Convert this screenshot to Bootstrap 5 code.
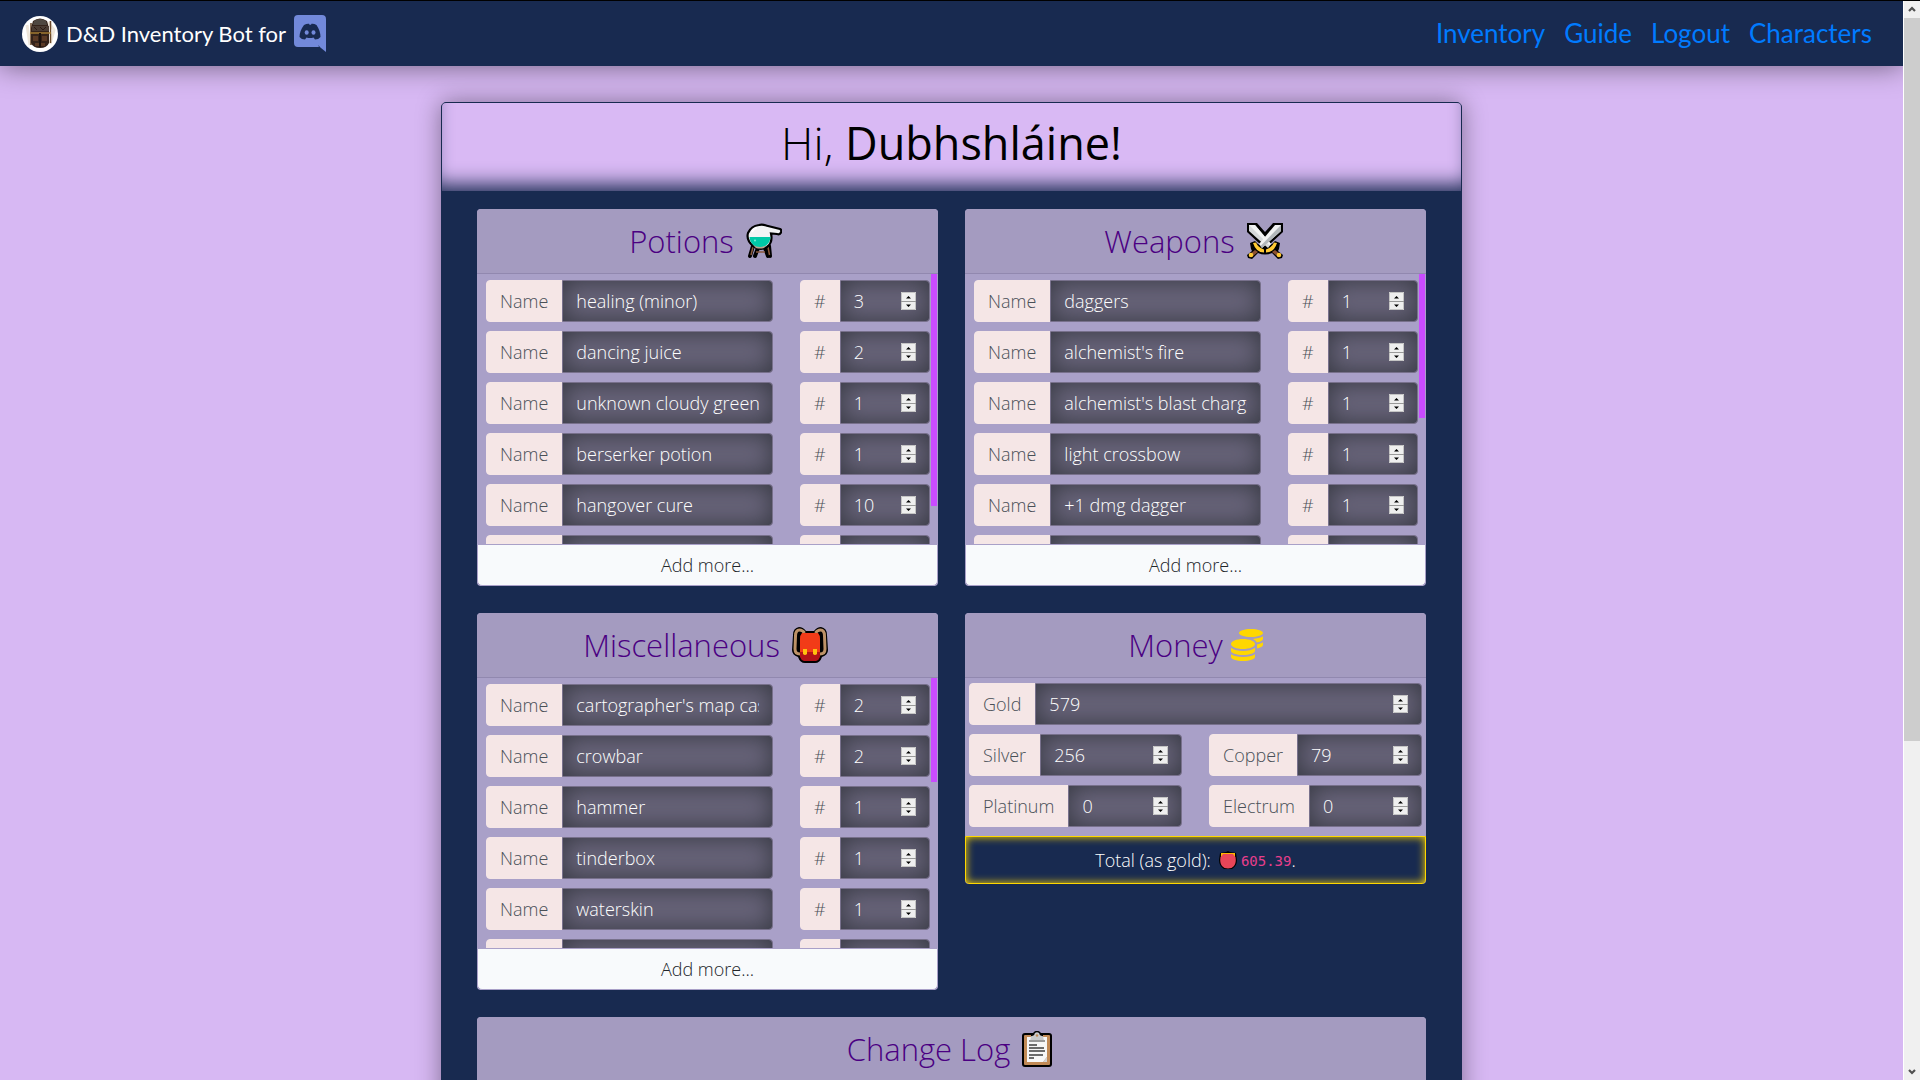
<!DOCTYPE html>
<html lang="en">
<head>
<meta charset="utf-8">
<meta name="viewport" content="width=device-width, initial-scale=1">
<title>D&amp;D Inventory Bot</title>
<link href="https://cdn.jsdelivr.net/npm/bootstrap@5.3.0/dist/css/bootstrap.min.css" rel="stylesheet">
<style>
:root { --navy: #182a50; --lilac: #d7b8f3; --gutter: 27px; }
body { font-family: "Open Sans", sans-serif; font-size: 18px; line-height: 27px; font-weight: 300; background: var(--lilac); color: #212529; }
.shell { border-top: 1px solid #000; }
.topbar { background: var(--navy); height: 65px; padding: 0 31px 0 22px; box-shadow: 0 0 28px rgba(0,0,0,.5); font-family: Lato, sans-serif; font-weight: 400; z-index: 2; }
.topbar .navbar-brand { color: #fff; font-size: 22px; gap: 8px; margin: 0; padding: 0; }
.topbar .links { gap: 19px; }
.topbar .links .nav-link { color: #007bff; font-size: 26px; line-height: 39px; padding: 0; }
.sheet { max-width: 1021px; margin: 36px auto 0; background: var(--navy); border: 1px solid var(--navy); border-radius: 5px; box-shadow: 0 0 24px rgba(0,0,0,.4); }
.greeting { background: #d9b9f4; color: #000; padding: 13px 17px 21px; box-shadow: inset 0 -16px 20px -10px var(--navy); border-radius: 4px 4px 0 0; }
.greeting h1 { font-size: 45px; line-height: 54px; font-weight: 300; margin: 0; }
.greeting span { font-weight: 400; }
.sections { padding: 18px 35px 36px; }
.row { --bs-gutter-x: var(--gutter); }
.sections > .row { --bs-gutter-y: var(--gutter); }
.box { background: #a9a0c8; border-radius: 4px; overflow: hidden; }
.box-title { height: 65px; background: #a49bc0; border-bottom: 1px solid #9188af; color: #4b0082; font-size: 31px; line-height: 38px; font-weight: 300; margin: 0; gap: 12px; padding-right: 4px; }
.box-title.tight { gap: 8px; padding-right: 0; }
.items { height: 270px; overflow: hidden; padding: 5px 8px 0 9px; }
.items { padding-top: 6px; }
.items .row, .coins .row { margin-bottom: 9px; }
.thumb { top: 0; right: 1px; width: 6px; background: #c94bff; }
.coins { padding: 5px 4px 0; }
.input-group { height: 42px; }
.input-group-text { background: #f5e6e6; color: #495057; border: 1px solid #f5e6e6; font-size: 18px; line-height: 27px; font-weight: 300; padding: 0 14px 0 13px; border-radius: 4px; }
.form-control, .form-control:focus { background: #68647a; border: 1px solid #78718c; color: #fff; font-size: 18px; line-height: 27px; font-weight: 300; padding: 0 13px; border-radius: 4px; box-shadow: inset 0 0 24px rgba(40,44,50,.8); }
input[type=number]::-webkit-inner-spin-button { -webkit-appearance: none; opacity: 1; width: 15px; height: 27px; background: url("data:image/svg+xml,%3Csvg xmlns='http://www.w3.org/2000/svg' width='15' height='18'%3E%3Cpath fill='%23efefef' d='M0 0h15v18H0z'/%3E%3Cpath fill='none' stroke='%23c4c4c4' d='M.5.5h14v17H.5z'/%3E%3Cpath stroke='%23999' d='M0 9.500h15'/%3E%3Cpath d='M5 6.500h5L7.500 4zM5 12.500h5L7.500 15z'/%3E%3C/svg%3E") center no-repeat; }
.add { background: #f8fafc; color: #212529; border: 1px solid #a9a0c8; border-radius: 0 0 5px 5px; height: 42px; font-size: 18px; line-height: 27px; font-weight: 300; padding: 0; display: block; }
.total { height: 48px; background: var(--navy); color: #fff; border: 1px solid #ffd700; border-radius: 0 0 4px 4px; box-shadow: inset 0 0 9px #ffd700; }
.total code { font-family: "DejaVu Sans Mono", monospace; font-size: 14px; line-height: 27px; color: #e83e8c; font-weight: 400; padding-top: 2px; }
.log { min-height: 300px; }
.pagebar { width: 17px; background: #f0f0f0; border-left: 1px solid #fff; }
.pagebar .arrow { height: 17px; }
.pagebar .grip { flex: 0 0 67%; background: #cdcdcd; }
svg { flex: none; display: block; }
</style>
<script src="https://cdn.jsdelivr.net/npm/bootstrap@5.3.0/dist/js/bootstrap.bundle.min.js"></script>
</head>
<body>
<div class="shell d-flex vh-100 overflow-hidden">
  <div class="flex-grow-1 overflow-hidden">
    <nav class="topbar navbar navbar-expand d-flex justify-content-between position-relative">
      <a class="navbar-brand d-flex align-items-center" href="#">
        <svg width="36" height="36" viewBox="0 0 36 36"><circle cx="18" cy="18" r="18" fill="#fff"/><path d="M26 6l6 8-4 14M5 9l3 20" stroke="#eee6da" stroke-width="3" fill="none"/><path d="M9 7v22M28.500 5v22" stroke="#6b4a2b" stroke-width="1.500"/><path d="M11 5q7-5 14 0l2 7v15q-2 5-9 5t-9-5V12z" fill="#35231a"/><path d="M12 5q6-4 12 0l1 4H11z" fill="#4f4841"/><path d="M10 10h17v5H10z" fill="#4a3b32"/><path d="M12 11l3 3m3-3l3 3m3-3l-3 3" stroke="#2a1a12"/><path d="M8 17h21" stroke="#a07a30" stroke-width="1.500"/><path d="M11 20h5v5h-5zm9 0h5v5h-5zM13 27h10v3H13z" fill="#5b3a25"/><path d="M18 17v14" stroke="#1d120d" stroke-width="2"/></svg>
        <span>D&amp;D Inventory Bot for</span>
        <svg width="32" height="37" viewBox="0 0 32 37"><path fill="#7289da" d="M4 0h24a4 4 0 0 1 4 4v33l-5-4-3-3 1 2H4a4 4 0 0 1-4-4V4a4 4 0 0 1 4-4z"/><path fill="#182a50" d="M10 10q3-1.500 5-1.200l.5 1h1.500l.5-1q2.500-.3 5 1.200 4 6 4 12-2 2.500-5.500 2.500l-1.500-2q-3.500 1-7 0l-1.500 2Q7.500 24.500 5.500 22q0-6 4.500-12z"/><ellipse cx="12.700" cy="17.500" rx="2" ry="2.200" fill="#7289da"/><ellipse cx="19.500" cy="17.500" rx="2" ry="2.200" fill="#7289da"/></svg>
      </a>
      <div class="navbar-nav links">
        <a class="nav-link" href="#">Inventory</a>
        <a class="nav-link" href="#">Guide</a>
        <a class="nav-link" href="#">Logout</a>
        <a class="nav-link" href="#">Characters</a>
      </div>
    </nav>

    <main class="sheet">
      <header class="greeting text-center"><h1>Hi, <span>Dubhshláine!</span></h1></header>
      <div class="sections">
        <div class="row">
          <section class="col-6">
            <div class="box">
              <h2 class="box-title d-flex align-items-center justify-content-center">Potions
                <svg width="36" height="36" viewBox="0 0 36 36"><path d="M7 23L4 33M12 25l-3 8M19 25l3 8M23 23l1 10" stroke="#000" stroke-width="4" stroke-linecap="round"/><path d="M7 24L5 32M22 24l1.500 8M10 29h9" stroke="#8b5a3c" stroke-width="1.500"/><path d="M13 2c4-1.500 6 .5 9 1l12 3q2 1 1 3.500t-4 1.500l-6-.5q2 9-4 13.500-7 4-14-1Q0 17 2 10 5 3 13 2z" fill="#f3f4f5" stroke="#000" stroke-width="2.200"/><path d="M3.500 14h21q-.5 6-5 9-6 3-11 0-4.500-3-5-9z" fill="#00c9a7"/><path d="M7 22q7 4 14 0l-3 3q-4 1-8 0z" fill="#b9a58e"/><circle cx="9" cy="17.500" r="1" fill="#7cebd7"/><path d="M6 9q2-4 5-4" stroke="#fff" stroke-width="2" fill="none"/></svg>
              </h2>
              <div class="items position-relative" data-list="potions"><div class="thumb position-absolute" style="height:232px"></div></div>
              <button type="button" class="add btn w-100">Add more...</button>
            </div>
          </section>
          <section class="col-6">
            <div class="box">
              <h2 class="box-title d-flex align-items-center justify-content-center">Weapons
                <svg width="36" height="36" viewBox="0 0 36 36"><path d="M36 0v9L22 22l3-1 3-3 5 2-1 6-1 2 5 4-1 3-4 1-6-6q-7 3-14 0l-6 6-4-1-1-3 5-4-1-2-1-6 5-2 3 3 3 1L0 9V0h10l8 9 8-9z" fill="#000"/><path d="M2 2h6l16 19-3 4L2 8z" fill="#d5d8da"/><path d="M2 2h6l16 19-1.500 1.500z" fill="#f1f2f2"/><path d="M34 2h-6L12 21l3 4L34 8z" fill="#f1f2f2"/><path d="M34 2v6L15 25l-1.500-2z" fill="#b3b8bb"/><path d="M8 27l3 2-5 4-3-2zM28 27l-3 2 5 4 3-2z" fill="#8b5131"/><path d="M6 20l3-.5q2 5 8 7v3q-8 0-11-9.500zM30 20l-3-.5q-2 5-8 7v3q8 0 11-9.500z" fill="#ffc933"/><circle cx="4" cy="32" r="2.300" fill="#ffc933"/><circle cx="32" cy="32" r="2.300" fill="#ffc933"/><path d="M18 25v4" stroke="#000" stroke-width="1.500"/></svg>
              </h2>
              <div class="items position-relative" data-list="weapons"><div class="thumb position-absolute" style="height:144px"></div></div>
              <button type="button" class="add btn w-100">Add more...</button>
            </div>
          </section>
          <section class="col-6">
            <div class="box">
              <h2 class="box-title d-flex align-items-center justify-content-center">Miscellaneous
                <svg width="36" height="36" viewBox="0 0 36 36"><path d="M7 0q4 0 7 4h8q3-4 7-4 6 1 6 8l1 15q0 5-6 7-2 6-7 6H13q-5 0-7-6-6-2-6-7L1 8q0-7 6-8z" fill="#000"/><path d="M8 27q-5 0-5-5L3.500 9q0-6 4-6 3 0 5 3M28 27q5 0 5-5L32.500 9q0-6-4-6-3 0-5 3" fill="none" stroke="#bd9267" stroke-width="3"/><path d="M7 9v15M29 9v15" stroke="#000" stroke-width="2.500"/><path d="M10 6h16q2 2 2 6v14H8V12q0-4 2-6z" fill="#f23b18"/><path d="M8 25h20v5q-1 3-4 4H12q-3-1-4-4z" fill="#b31318"/><path d="M11 22h4v5q-2 2-4 0zM21 22h4v5q-2 2-4 0z" fill="#ffc20e"/></svg>
              </h2>
              <div class="items position-relative" data-list="misc"><div class="thumb position-absolute" style="height:104px"></div></div>
              <button type="button" class="add btn w-100">Add more...</button>
            </div>
          </section>
          <section class="col-6">
            <div class="box">
              <h2 class="box-title tight d-flex align-items-center justify-content-center">Money
                <svg width="32" height="32" viewBox="0 0 512 512" fill="#ffd700"><path d="M0 405.300V448c0 35.300 86 64 192 64s192-28.700 192-64v-42.700C342.700 434.400 267.200 448 192 448S41.300 434.400 0 405.300zM320 128c106 0 192-28.700 192-64S426 0 320 0 128 28.700 128 64s86 64 192 64zM0 300.400V352c0 35.300 86 64 192 64s192-28.700 192-64v-51.600c-41.300 34-116.900 51.600-192 51.600S41.300 334.400 0 300.400zm416 11c57.300-11.100 96-31.700 96-55.400v-42.700c-23.200 16.400-57.300 27.600-96 34.500v63.600zM192 160C86 160 0 195.800 0 240s86 80 192 80 192-35.800 192-80-86-80-192-80zm219.300 56.300c60-10.800 100.700-32 100.700-56.300v-42.700c-35.500 25.100-96.500 38.600-160.700 41.800 29.500 14.300 51.200 33.500 60 57.200z"/></svg>
              </h2>
              <div class="coins">
                <div class="row"><div class="col-12"><div class="input-group"><label class="input-group-text" for="gold">Gold</label><input id="gold" type="number" class="form-control" value="579"></div></div></div>
                <div class="row">
                  <div class="col-6"><div class="input-group"><label class="input-group-text" for="silver">Silver</label><input id="silver" type="number" class="form-control" value="256"></div></div>
                  <div class="col-6"><div class="input-group"><label class="input-group-text" for="copper">Copper</label><input id="copper" type="number" class="form-control" value="79"></div></div>
                </div>
                <div class="row">
                  <div class="col-6"><div class="input-group"><label class="input-group-text" for="platinum">Platinum</label><input id="platinum" type="number" class="form-control" value="0"></div></div>
                  <div class="col-6"><div class="input-group"><label class="input-group-text" for="electrum">Electrum</label><input id="electrum" type="number" class="form-control" value="0"></div></div>
                </div>
              </div>
              <div class="total d-flex align-items-center justify-content-center"><span>Total (as gold):</span><svg class="ms-2 me-1" width="18" height="18" viewBox="0 0 18 18"><path d="M1 2l6-1 2-1 2 1 6 1 1 7q0 6-5 9H5q-5-3-5-9z" fill="#000"/><path d="M2 2h14v5H2z" fill="#ffb400"/><path d="M4 3h10q1 2 2.500 3 1 6-1.500 9-2 2.500-6 2.500T3 15Q.5 12 1.500 6 3 5 4 3z" fill="#ea4558"/></svg><code>605.39</code><span>.</span></div>
            </div>
          </section>
          <section class="col-12">
            <div class="box log">
              <h2 class="box-title d-flex align-items-center justify-content-center">Change Log
                <svg width="30" height="36" viewBox="0 0 30 36"><rect x="0" y="2" width="30" height="34" rx="3" fill="#000"/><rect x="2" y="4" width="26" height="30" rx="1" fill="#c18a56"/><path d="M5 6h20v20l-4 5H5z" fill="#f7f7f7"/><path d="M25 26v5h-4z" fill="#d2d3d4"/><path d="M9 5q3-1 3-3 3-3 6 0 0 2 3 3l1 5H8z" fill="#c8c9ca"/><path d="M9 4.500q3-.5 3-2.500 3-3 6 0 0 2 3 2.500" fill="none" stroke="#000" stroke-width="1.500"/><circle cx="15" cy="4.500" r="1.200" fill="#c18a56"/><path d="M7 10h16" stroke="#999" stroke-width="2"/><path d="M7 14h8M7 17h15M7 20h16M7 24h14M7 27h5" stroke="#3f3f3f" stroke-width="1.300"/></svg>
              </h2>
            </div>
          </section>
        </div>
      </div>
    </main>
  </div>
  <div class="pagebar d-flex flex-column flex-shrink-0" aria-hidden="true">
    <div class="arrow d-flex align-items-center justify-content-center"><svg width="8" height="7" viewBox="0 0 8 7"><path d="M1 5l3-3 3 3" fill="none" stroke="#505050" stroke-width="2.200"/></svg></div>
    <div class="grip"></div>
    <div class="arrow d-flex align-items-center justify-content-center mt-auto"><svg width="8" height="7" viewBox="0 0 8 7"><path d="M1 2l3 3 3-3" fill="none" stroke="#505050" stroke-width="2.200"/></svg></div>
  </div>
</div>
<script>
const lists = {
  potions: [["healing (minor)", 3], ["dancing juice", 2], ["unknown cloudy green", 1], ["berserker potion", 1], ["hangover cure", 10], ["", ""]],
  weapons: [["daggers", 1], ["alchemist's fire", 1], ["alchemist's blast charge", 1], ["light crossbow", 1], ["+1 dmg dagger", 1], ["", ""]],
  misc: [["cartographer's map case", 2], ["crowbar", 2], ["hammer", 1], ["tinderbox", 1], ["waterskin", 1], ["", ""]]
};
for (const [key, items] of Object.entries(lists)) {
  document.querySelector(`[data-list="${key}"]`).insertAdjacentHTML("beforeend", items.map(([name, count], i) => `
    <div class="row">
      <div class="col-8"><div class="input-group flex-nowrap"><label class="input-group-text" for="${key}-name-${i}">Name</label><input id="${key}-name-${i}" type="text" class="form-control" value="${name}"></div></div>
      <div class="col-4"><div class="input-group flex-nowrap"><label class="input-group-text" for="${key}-count-${i}">#</label><input id="${key}-count-${i}" type="number" class="form-control" value="${count}"></div></div>
    </div>`).join(""));
}
</script>
</body>
</html>
